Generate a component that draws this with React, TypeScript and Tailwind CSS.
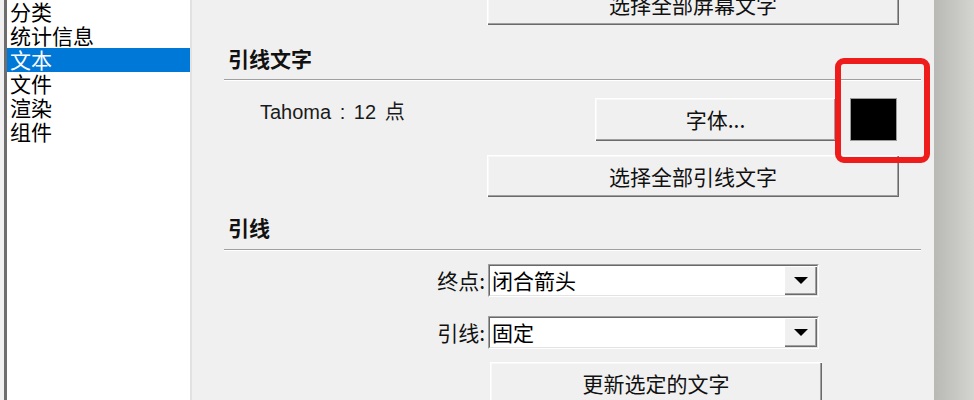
import React from "react";

function Btn({ className, children }: { className: string; children?: React.ReactNode }) {
  return (
    <div
      className={`flex shrink-0 items-center justify-center bg-[#f0f0f0] text-[21px] leading-none text-[#111] shadow-[inset_1px_1px_#ffffff,inset_-1px_-1px_#6a6a6a,inset_-2px_-2px_#a0a0a0,inset_2px_2px_#f8f8f8] ${className}`}
    >
      {children}
    </div>
  );
}

function Combo({ label, value }: { label: string; value: string }) {
  return (
    <div className="flex h-[32px] items-center">
      <div className="w-[261px] shrink-0 text-right text-[21px] leading-none text-[#111]">{label}</div>
      <div className="ml-[3px] flex h-[33px] w-[331px] shrink-0 border border-t-[#a0a0a0] border-l-[#a0a0a0] border-b-white border-r-white">
        <div className="flex flex-1 border border-t-[#696969] border-l-[#696969] border-b-[#e3e3e3] border-r-[#e3e3e3] bg-white">
          <div className="flex flex-1 items-center pl-[2px] text-[21px] leading-none text-black">{value}</div>
          <div className="flex w-[33px] items-center justify-center bg-[#f0f0f0] shadow-[inset_1px_1px_#ffffff,inset_-1px_-1px_#6a6a6a,inset_-2px_-2px_#a0a0a0]">
            <div className="h-0 w-0 border-x-[7px] border-t-[7px] border-x-transparent border-t-black" />
          </div>
        </div>
      </div>
    </div>
  );
}

function Sep() {
  return <div className="h-[2px] border-t border-b border-t-[#a0a0a0] border-b-white" />;
}

export default function App() {
  const items = ["分类", "统计信息", "文本", "文件", "渲染", "组件"];
  return (
    <div className="relative flex h-[400px] w-[974px] overflow-hidden bg-[#f0f0f0] font-['Noto_Sans_CJK_SC','Noto_Sans',sans-serif] text-black">
      <div className="w-[4px] shrink-0 bg-[#f0f0f0]" />
      <div className="w-[188px] shrink-0 border-l-[3px] border-r-2 border-l-[#6e6e6e] border-r-[#e2e2e2] bg-white">
        {items.map((t, i) => (
          <div
            key={t}
            className={
              i === 2
                ? "h-[24px] bg-[#0078d7] pl-[3px] text-[21px] leading-[23px] text-white"
                : "h-[24px] pl-[3px] text-[21px] leading-[23px] text-black"
            }
          >
            {t}
          </div>
        ))}
      </div>

      <div className="flex w-[742px] shrink-0 flex-col pl-[32px] pr-[13px]">
        <Btn className="mt-[-17px] ml-[263px] h-[42px] w-[412px]">选择全部屏幕文字</Btn>

        <div className="mt-[18px] h-[30px] pl-[4px] text-[21px] font-bold leading-[30px] text-[#111]">引线文字</div>
        <div className="mt-[6px]">
          <Sep />
        </div>

        <div className="mt-[17px] flex items-start">
          <div className="w-[371px] shrink-0 pl-[36px] font-['Liberation_Sans',sans-serif] text-[20px] leading-[26px] text-[#1a1a1a] [word-spacing:3px]">
            Tahoma : 12 <span className="font-['Noto_Sans_CJK_SC',sans-serif]">点</span>
          </div>
          <Btn className="h-[43px] w-[241px]">字体...</Btn>
          <div className="ml-[14px] h-[43px] w-[47px] shrink-0 border border-[#9a9a9a] bg-black" />
        </div>

        <Btn className="mt-[14px] ml-[263px] h-[42px] w-[412px]">选择全部引线文字</Btn>

        <div className="mt-[15px] h-[30px] pl-[4px] text-[21px] font-bold leading-[30px] text-[#111]">引线</div>
        <div className="mt-[7px]">
          <Sep />
        </div>

        <div className="mt-[13px]">
          <Combo label="终点:" value="闭合箭头" />
        </div>
        <div className="mt-[20px]">
          <Combo label="引线:" value="固定" />
        </div>

        <Btn className="mt-[14px] ml-[266px] h-[42px] w-[332px]">更新选定的文字</Btn>
      </div>

      <div className="flex-1 bg-gradient-to-r from-[#b8b8b4] to-[#d4d4d0]" />

      <div className="absolute left-[835px] top-[58px] h-[105px] w-[95px] rounded-[9px] border-[6px] border-[#ef1c1c]" />
    </div>
  );
}
